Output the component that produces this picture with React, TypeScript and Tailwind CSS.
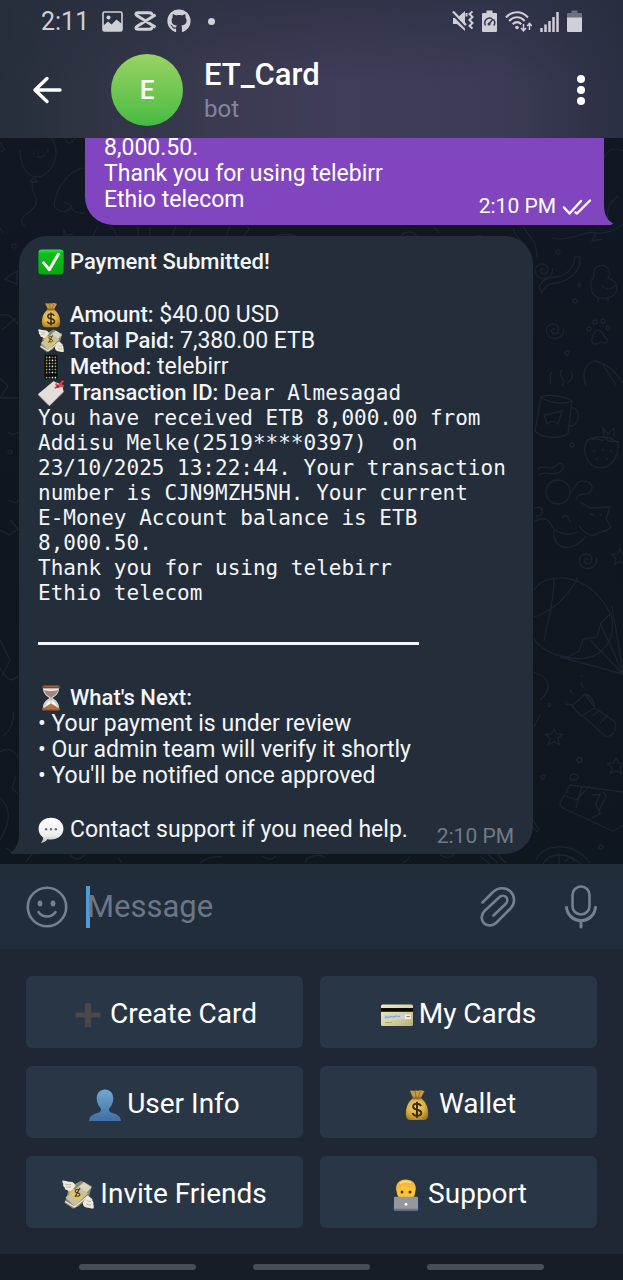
import type { ReactNode } from "react";
import { FaGithub } from "react-icons/fa";

type IconProps = { className?: string };

/* ---------- emoji drawings ---------- */

function CheckEmoji({ className = "" }: IconProps) {
  return (
    <svg viewBox="0 0 32 32" className={className} aria-hidden="true">
      <defs>
        <linearGradient id="chk" x1="0" y1="0" x2="0" y2="1">
          <stop offset="0" stopColor="#3fe04a" />
          <stop offset="0.15" stopColor="#0fbf1c" />
          <stop offset="1" stopColor="#08a80c" />
        </linearGradient>
      </defs>
      <rect x="0.5" y="0.5" width="31" height="31" rx="4" fill="url(#chk)" />
      <path d="M7 17l7 8.5L25 6.5" fill="none" stroke="#fff" strokeWidth="3.6" strokeLinecap="round" strokeLinejoin="round" />
    </svg>
  );
}

function MoneyBagEmoji({ className = "" }: IconProps) {
  return (
    <svg viewBox="0 0 32 32" className={className} aria-hidden="true">
      <defs>
        <radialGradient id="bag" cx="0.45" cy="0.4" r="0.65">
          <stop offset="0" stopColor="#f6d873" />
          <stop offset="0.6" stopColor="#dcae43" />
          <stop offset="1" stopColor="#a47a24" />
        </radialGradient>
      </defs>
      <path d="M9 2c2-1.200 3 .4 4.500-.2C15 1 16 2.200 18 1.500c2-.7 3 .6 5.500.5L19.800 9h-7.600z" fill="#c99a3a" />
      <path d="M14 2l1 6M19 2.500L17.500 8" stroke="#8d6a22" strokeWidth="0.8" />
      <path d="M12 9.500C8 12 5 17 4.800 24c-.1 4 .9 7 4.200 7h14c3.300 0 4.300-3 4.200-7C27 17 24 12 20 9.500z" fill="url(#bag)" />
      <rect x="11.500" y="7.800" width="9" height="2.600" rx="1.300" fill="#9c6b35" />
      <path d="M20 17.200c-.6-1.700-2-2.400-4-2.400-2.300 0-3.900 1.100-3.900 2.900 0 4 8.200 2 8.200 6 0 2-1.900 3.100-4.300 3.100-2.300 0-4-.9-4.400-2.900M16 12.800v16" fill="none" stroke="#3f3013" strokeWidth="2" />
    </svg>
  );
}

function WingedMoneyEmoji({ className = "" }: IconProps) {
  return (
    <svg viewBox="0 0 32 32" className={className} aria-hidden="true">
      <path d="M6.500 8.500L19 1.800 29.800 7 27 17.500 17 27l-6 2.800-8.500-6L5 17z" fill="#8b8a72" />
      <path d="M8 15L22 3l7.500 5.500L15.500 22z" fill="#d9d6bd" />
      <path d="M3.500 18.500L17 7.500l9 7L12.500 27z" fill="#c5c1a4" />
      <path d="M3 22.500l9.500 5.500L26 17" fill="none" stroke="#efecd8" strokeWidth="1.300" />
      <path d="M10.500 8.500l11 9.500-5.500 5L6.500 14z" fill="#e3c460" opacity="0.85" />
      <path d="M16.800 10.500c-2-.8-4 .7-3.300 2.400.8 1.600 4 .2 4.400 2.500.2 1.700-2.600 2.600-4.400 1M18 9l-5 9" fill="none" stroke="#483c1b" strokeWidth="1.200" />
      <path d="M.5 1.500c3 0 5 1.500 7.500 1.200 3-.2 5 1.600 5.500 4.300L9 12c-1.500.7-3 .2-3.800-1-1.700.2-2.500-1-2.500-2.500C1 7.500.8 6 1.300 4.800.3 4 .2 2.500.5 1.500z" fill="#edeadd" />
      <path d="M3 5c2 1 4 1 6 .5M4 8c2 .5 3.500.4 5-.4" fill="none" stroke="#a9a692" strokeWidth="0.8" />
      <path d="M31.500 29.500c-2.500.3-4.500-.9-7-1-2.500-.2-3.900-2.500-3.700-5L25 17.500c1.700-.5 3 .3 3.700 1.500 1.500.3 2 1.500 1.700 2.800 1.300 1 1.300 2.400.8 3.400.7 1.300.8 2.800.3 4.300z" fill="#edeadd" />
      <path d="M29 26c-2 .2-3.700-.5-5-1.300M29 22.500c-1.700 0-3-.3-4-1" fill="none" stroke="#a9a692" strokeWidth="0.8" />
    </svg>
  );
}

const appColors = ["#58c26b", "#e8e8e8", "#56a9dd", "#e08c43", "#d9534f", "#e7c84b"];

function PhoneEmoji({ className = "" }: IconProps) {
  return (
    <svg viewBox="0 0 32 32" className={className} aria-hidden="true">
      <rect x="7.500" y="0.500" width="17" height="31" rx="2" fill="#0b0b0c" stroke="#33373c" strokeWidth="0.6" />
      {Array.from({ length: 24 }, (_, i) => (
        <rect key={i} x={9.6 + (i % 4) * 3.6} y={3.2 + Math.floor(i / 4) * 3.7} width="2" height="2" rx="0.5" fill={appColors[(i * 5 + Math.floor(i / 4)) % 6]} />
      ))}
      {[0, 1, 2, 3].map((i) => (
        <rect key={i} x={9.6 + i * 3.6} y="28" width="2" height="2" rx="0.5" fill={["#58c26b", "#57a0e0", "#e9e9e9", "#f0f0a0"][i]} />
      ))}
    </svg>
  );
}

function TagEmoji({ className = "" }: IconProps) {
  return (
    <svg viewBox="0 0 32 32" className={className} aria-hidden="true">
      <path d="M19 1.500L0.500 17c-.5.500-.5 1 0 1.600L13 31c.7.700 1.400.7 2 0L31.500 14.500 30 6z" fill="#e4dedb" />
      <path d="M.6 18.200L13.200 30.800c.6.600 1.200.6 1.700 0L31.500 14.500" fill="none" stroke="#b9aea9" strokeWidth="1.200" />
      <path d="M24.500 8L22.300 5.200M24.500 8l6-6.500M24.500 8l6.500-1M24.500 8l-3 1.500" stroke="#e0404d" strokeWidth="2.400" strokeLinecap="round" />
      <circle cx="24.300" cy="8.200" r="1.600" fill="#a8222f" />
    </svg>
  );
}

function HourglassEmoji({ className = "" }: IconProps) {
  return (
    <svg viewBox="0 0 32 32" className={className} aria-hidden="true">
      <path d="M6 3.500h20c0 6-3 9.500-8.200 12.500C23 19 26 22.500 26 28.500H6C6 22.500 9 19 14.200 16 9 13 6 9.500 6 3.500z" fill="#cfd4d8" />
      <path d="M7.500 6.500h17c-.8 4-4.200 6.800-8.500 8.800-4.300-2-7.700-4.800-8.500-8.800z" fill="#a48577" />
      <path d="M8 5.500c5 1.500 11 1.500 16 0" stroke="#f2f2f2" strokeWidth="1.600" fill="none" />
      <path d="M16 18c-3 2-6 4-7 9h14c-1-5-4-7-7-9z" fill="#f4f6f7" />
      <path d="M8 28.500c2-3 5-4.500 8-5.500 3 1 6 2.500 8 5.500z" fill="#b7723e" />
      <path d="M16 14v10" stroke="#b98a63" strokeWidth="0.8" />
      <rect x="5" y="0.500" width="22" height="3.600" rx="1.200" fill="#84452a" />
      <rect x="5" y="28" width="22" height="3.500" rx="1.200" fill="#a35a30" />
      <path d="M7 1.500h18M7 29h18" stroke="#c98757" strokeWidth="0.7" />
    </svg>
  );
}

function SpeechEmoji({ className = "" }: IconProps) {
  return (
    <svg viewBox="0 0 32 32" className={className} aria-hidden="true">
      <defs>
        <linearGradient id="spk" x1="0" y1="0" x2="0" y2="1">
          <stop offset="0" stopColor="#ffffff" />
          <stop offset="0.7" stopColor="#ececec" />
          <stop offset="1" stopColor="#b9bcbe" />
        </linearGradient>
      </defs>
      <path d="M16 1C7.500 1 .7 6.500.7 14.500c0 5 2.300 8.500 5.500 10.600.3 2.300-.8 4.800-3 6.700 3.800-.2 6.700-2 8.300-4.500 1.500.3 3 .4 4.500.4 8.500 0 15.300-5.200 15.300-13.200S24.500 1 16 1z" fill="url(#spk)" />
      <circle cx="10" cy="15" r="1.500" fill="#6b6d6f" />
      <circle cx="16" cy="15" r="1.500" fill="#6b6d6f" />
      <circle cx="22" cy="15" r="1.500" fill="#6b6d6f" />
    </svg>
  );
}

function PlusEmoji({ className = "" }: IconProps) {
  return (
    <svg viewBox="0 0 32 32" className={className} aria-hidden="true">
      <path d="M13 4h6v9.500h9.500v5H19V28h-6v-9.500H3.500v-5H13z" fill="#48484a" />
    </svg>
  );
}

function CardEmoji({ className = "" }: IconProps) {
  return (
    <svg viewBox="0 0 32 32" className={className} aria-hidden="true">
      <defs>
        <linearGradient id="card" x1="0" y1="0" x2="1" y2="1">
          <stop offset="0" stopColor="#f0eac0" />
          <stop offset="0.5" stopColor="#dcd5a0" />
          <stop offset="1" stopColor="#b9ad70" />
        </linearGradient>
      </defs>
      <rect x="0" y="5.500" width="32" height="21.500" rx="1.600" fill="url(#card)" />
      <rect x="0" y="9" width="32" height="3.800" fill="#0a0a08" />
      <rect x="3" y="15.500" width="22" height="5" fill="#c3d3d8" />
      <path d="M4 18.500c2-2 3 1 5-.5s3 1 5-.5 3 1 5-.4" fill="none" stroke="#6391b5" strokeWidth="0.9" />
      <rect x="24" y="15.500" width="6" height="4.500" fill="#eff0e9" />
      <path d="M25.500 17.600h3.500" stroke="#a04a4a" strokeWidth="0.9" />
      <path d="M4 23.500h7" stroke="#aca57c" strokeWidth="1" />
    </svg>
  );
}

function PersonEmoji({ className = "" }: IconProps) {
  return (
    <svg viewBox="0 0 32 32" className={className} aria-hidden="true">
      <defs>
        <linearGradient id="usr" x1="0" y1="0" x2="0" y2="1">
          <stop offset="0" stopColor="#73a7cf" />
          <stop offset="1" stopColor="#3f6fa5" />
        </linearGradient>
      </defs>
      <path d="M16 0.500c-5 0-8.300 3.700-8.300 8.800 0 4.200 1.600 8 4.200 10.200.3 2.200-.4 3.600-2.600 4.300C4.500 25.400.6 26.500 0 32h32c-.6-5.500-4.500-6.600-9.300-8.200-2.200-.7-2.900-2.100-2.600-4.300 2.600-2.200 4.200-6 4.200-10.200 0-5.100-3.300-8.800-8.300-8.800z" fill="url(#usr)" />
    </svg>
  );
}

function TechnologistEmoji({ className = "" }: IconProps) {
  return (
    <svg viewBox="0 0 32 32" className={className} aria-hidden="true">
      <path d="M3 31.500c.2-6 3-9 7.500-10h11c4.500 1 7.300 4 7.500 10z" fill="#2d3bb8" />
      <ellipse cx="16" cy="12" rx="9.400" ry="10" fill="#fbc531" />
      <path d="M6.300 12C5 4.500 9.500.5 15.500.5c6.500 0 11.500 3.700 10.200 11.500l-2-4c-3 .8-8 .4-11-1.500-1 2.500-4 3.500-6.400 5.500z" fill="#f3b840" />
      <path d="M10 4.500c3-2.500 8-2.700 11-.6" fill="none" stroke="#ffe09a" strokeWidth="1.500" />
      <circle cx="12" cy="13" r="1.500" fill="#4d351a" />
      <circle cx="20" cy="13" r="1.500" fill="#4d351a" />
      <rect x="4" y="17.800" width="24" height="13.700" rx="1.200" fill="#93979e" />
      <rect x="4" y="29.800" width="24" height="1.700" fill="#6c7077" />
      <circle cx="16" cy="25.200" r="1.500" fill="#f2f3f5" />
    </svg>
  );
}

/* ---------- interface icons ---------- */

function StatusLeftIcons() {
  return (
    <>
      <svg viewBox="0 0 21 21" className="h-[21px] w-[21px]" aria-hidden="true">
        <rect x="1" y="1" width="19" height="19" rx="1.500" fill="none" stroke="currentColor" strokeWidth="1.600" />
        <circle cx="6.500" cy="6.500" r="2" fill="currentColor" />
        <path d="M1 15l5-4.500 3.500 3 5-5L20 13v7H1z" fill="currentColor" />
      </svg>
      <svg viewBox="0 0 22 20" className="h-5 w-[22px]" aria-hidden="true">
        <path d="M21.500 3.800L3.200 15.200c-2 1.300-1.600 3 .6 3h11.700c2 0 2.500-1 2.500-2.500M21.500 16.200L3.200 4.800c-2-1.300-1.600-3 .6-3h11.700c2 0 2.500 1 2.500 2.500" fill="none" stroke="currentColor" strokeWidth="3" />
      </svg>
      <FaGithub className="h-6 w-6" aria-hidden="true" />
    </>
  );
}

function StatusRightIcons() {
  return (
    <>
      <svg viewBox="0 0 22 22" className="h-[22px] w-[22px]" aria-hidden="true">
        <path d="M1 8h4l8-7v20l-8-7H1z" fill="currentColor" />
        <path d="M0 3.500L14 18" stroke="#3a3b50" strokeWidth="2.200" />
        <path d="M1 1.500l13 13.500" stroke="currentColor" strokeWidth="2.200" />
        <path d="M20.500 1.500l-3 2.500 3 3-3 3 3 3-3 3 3 2.500M14.500 3v3.500" fill="none" stroke="currentColor" strokeWidth="2" />
      </svg>
      <svg viewBox="0 0 15 22" className="h-[22px] w-[15px]" aria-hidden="true">
        <path d="M4.500.5h6V3H14a1 1 0 011 1v17a1 1 0 01-1 1H1a1 1 0 01-1-1V4a1 1 0 011-1h3.500z" fill="currentColor" />
        <path d="M3.500 15.500a5 5 0 016.500-7M11.500 9.500a5 5 0 01.3 6M7 14l4-5" fill="none" stroke="#36384b" strokeWidth="1.500" />
        <circle cx="7" cy="14" r="1.500" fill="#36384b" />
      </svg>
      <svg viewBox="0 0 27 22" className="h-[22px] w-[27px]" aria-hidden="true">
        <path d="M1 7.500C7 .5 17 .5 23 7.500M4.200 11c4.500-5 11-5 15.500 0M7.800 14.300c2.500-2.800 6-2.800 8.500 0" fill="none" stroke="currentColor" strokeWidth="2.200" />
        <circle cx="12" cy="17.500" r="1.800" fill="currentColor" />
        <path d="M18.500 14v6M16 18l2.500 2.800L21 18M24.500 20v-6M22.200 16l2.300-2.600L26.800 16" fill="none" stroke="currentColor" strokeWidth="1.500" />
      </svg>
      <svg viewBox="0 0 19 22" className="h-[22px] w-[19px]" aria-hidden="true">
        <path d="M1.500 22v-4M5.500 22v-7.500M9.500 22V11M13.500 22V7M17.500 22V2" stroke="currentColor" strokeWidth="2.500" />
      </svg>
      <svg viewBox="0 0 15 22" className="h-[22px] w-[15px]" aria-hidden="true">
        <path d="M4.500.5h6V3H14a1 1 0 011 1v4H0V4a1 1 0 011-1h3.500z" fill="currentColor" opacity="0.4" />
        <path d="M0 7.500h15V21a1 1 0 01-1 1H1a1 1 0 01-1-1z" fill="currentColor" />
      </svg>
    </>
  );
}

function DoubleCheck() {
  return (
    <svg viewBox="0 0 30 18" className="h-[18px] w-[30px]" role="img" aria-label="Read">
      <path d="M2 9.500l5.500 6L19 3M13.500 14.500l1.500 1L28 2.500" fill="none" stroke="currentColor" strokeWidth="2.400" strokeLinecap="round" strokeLinejoin="round" />
    </svg>
  );
}

/* ---------- wallpaper ---------- */

function Spiral({ x, y }: { x: number; y: number }) {
  return <path transform={`translate(${x} ${y})`} d="M1 0c0-2-3-2-3.500.5-.5 3 4 5 6.500 1.500C6.500-2 3-6.500-1.500-6-7-5.500-9 0-7 4c2.500 5 10 6 14 2 2-2 3-5 2.500-8" />;
}

function Star({ x, y }: { x: number; y: number }) {
  return <path transform={`translate(${x} ${y})`} d="M0-8l2.500 5 6 .5-4.500 4 1.500 6L0 4.500-5.500 7.500-4 1.500l-4.500-4 6-.5z" />;
}

function Wallpaper() {
  return (
    <svg
      viewBox="0 138 623 726"
      preserveAspectRatio="xMidYMid slice"
      className="absolute inset-0 h-full w-full text-[#1b2530]"
      fill="none"
      stroke="currentColor"
      strokeWidth="1.300"
      aria-hidden="true"
    >
      {/* balloon and dolphin */}
      <path d="M20 150c0 14 6 26 16 27 11 0 20-12 20-25 0-9-4-14-8-18M33 178l-3 4h7l-3-4M33 182c-4 10 6 14 3 22-3 9-16 10-14 19 0 2 2 3 3 3M34 151v3M48 149v3M37 156q4 3 8-1" />
      <path d="M84 168c-14 2-28 18-30 38 4 6 12 8 17 1 2 5 8 7 14 6M64 202l8 4M0 143l5 6-5 3M65 138c1 6 7 7 10 0M0 228l3 5M64 230l3 5 5-1-1 7-7-2zM16 246a2 2 0 100 .1M5 279l12-8v13z" />
      {/* strip between the bubbles */}
      <path d="M98 226l-7 14M110 226c6 3 4 10 11 14M138 226v12M150 227v11M176 226l-5 12M192 228l-4 10M230 226l-4 12M246 226c6 2 0 8-5 12M272 238q12-7 30 0M400 238c3-8 16-8 17 0M434 227l5 6M474 238q5-5 10 0" />
      {/* left edge */}
      <path d="M0 315c8-2 14 3 18 10M2 330l14-12M0 378l8 8-8 12M0 398h18M8 432q4 5 11 0M12 452a2 2 0 100 .1M8 500l8 3 3-3M10 520l8 9-9 6-9-5M0 640l10 20-8 16M0 668c8 14 12 14 18 8M13 712c2 10-4 20-10 24M0 752c8-6 16 0 18 6M0 798c12 10 10 26 0 42M16 776l-4 12 6 6M6 848l8 6" />
      {/* right side, top */}
      <path d="M603 161c4-12 10-14 20-10M608 218c-2-8 2-16 10-22M552 238c12 4 26-4 41-6 10 4 20-1 30-8M596 233l-4 8 10-2M513 228c2 12 14 14 18 30M523 226c4 10 14 12 14 32" />
      <Spiral x={543} y={270} />
      <path d="M580 257c1 16-12 24-24 26-9 1-12 4-14 10l-3-6c3-8 10-10 17-10 12-2 18-10 19-20zM560 252a2 2 0 100 .1M581 285a1.500 1.500 0 100 .1M573 301a2 2 0 104 0 2 2 0 10-4 0" />
      <path d="M594 276a8 8 0 1114 2c7 2 11 8 8 14-4 8-20 9-24 0-2-6-1-12 2-16zM602 285c4 6 9 5 14 0M598 298v4M608 298v4" />
      <Spiral x={554} y={330} />
      <path d="M592 339c2-10 8-12 12-3 6 5 3 9-3 6-5 3-10 3-9-3zM587 329a2 2 0 104 0 2 2 0 10-4 0M593 322a2 2 0 104 0 2 2 0 10-4 0M601 321a2 2 0 104 0 2 2 0 10-4 0M606 328a2 2 0 104 0 2 2 0 10-4 0M565 353a2 2 0 104 0 2 2 0 10-4 0" />
      <path d="M586 386c-4-12-2-22 8-25 14 2 22 12 29 22M602 363l14 22M562 370c-6 6 6 8 0 16M550 384c2-6-2-8 2-12M567 383q8-5 4-12" />
      {/* mug and strawberry */}
      <path d="M541 397c8-4 26 0 31 4M541 397l-6 34c6 8 28 8 33 2l4-32c-8 4-24 2-31-4zM571 408c10-2 10 20-3 18M544 415l18-4-4 13-6-3-5 3z" />
      <path d="M586 442c4-6 26-8 32 2 1 14-8 24-18 24-12-1-18-14-14-26zM592 440c6-4 10 4 14-2 2 6 10 2 14 4M604 436l-1-8 5 6 6-6v9M594 450v2M603 449v2M611 450v2M597 458v2M607 458v2M570 445a2 2 0 104 0 2 2 0 10-4 0" />
      {/* cats */}
      <path d="M537 470c6-8 14 4 22-7 6 0 6 8-2 10-6 2-14-2-18 2M546 492a12 12 0 1024 0 12 12 0 10-24 0M570 494l8-12c10-4 18 4 12 10-4 4-14 0-14 8M580 502l10 6 20-1-4 12 5 8c-6 6-12 4-16 8-8 2-14-6-16-10M590 514l4 1M601 514v2M534 522c8-6 14-4 18 4 4 8 16 10 26 6M554 530c-2 20 18 24 32 6M562 518q6-6 8 4M534 508c10-4 12 8 2 8" />
      <Spiral x={587} y={560} />
      <Star x={620} y={557} />
      {/* hot air balloon */}
      <path d="M534 590c12-20 60-18 78 28 4 26-14 44-40 40-16-1-34-10-38-20M554 579c0 24-6 40-10 62M578 577c-10 20-26 34-44 40M611 613l-10 10-4 14-14 2-4 12-12 6M600 623l23 50M612 606l11 66M560 657l63 17M590 640l33 34" />
      <path d="M534 672c18 6 18 18 6 28M540 715l-6 12M582 675v2M551 705a1.500 1.500 0 100 .1M566 704l6 1M570 690l3 4M581 682l2 6" />
      {/* flashlight */}
      <path d="M572 706l13-12 10 14-14 8zM585 694q8 2 10 14M595 708l20 14c2 10-4 16-10 14l-22-20M592 716l8-6M600 723l8-8" />
      <Star x={554} y={737} />
      <Star x={616} y={766} />
      <path d="M577 760a2.500 2.500 0 105 0 2.500 2.500 0 10-5 0M541 777a2 2 0 104 0 2 2 0 10-4 0M599 847a2 2 0 104 0 2 2 0 10-4 0M570 777a4 3 0 108 0 4 3 0 10-8 0" />
      {/* gift */}
      <path d="M560 803l10-18 53 7M560 803q0 4 5 6l48 22 10-6M566 796l10 4 14-14M582 786l-6 22M592 795l8-1-4 10 4 10-8 4M603 792c8 6-4 10-4 22" />
      {/* bottom strip */}
      <path d="M26 862l6-8M70 855q8 8 14 0M118 858l4 5M200 863q10-8 22-6M262 856q8 6 14 0M305 863c2-8 16-10 20-5M410 856q-3 6-8 7M440 855q8 5 14 0M480 856l10 8M488 855l10 8M498 855l8 8M536 860c6-16 38-20 54 3M543 864c6-12 26-12 38 0M559 854v10M566 862a4 4 0 118 0M533 820l6 10M533 828l5 4" />
    </svg>
  );
}

/* ---------- content ---------- */

function Line({ icon, children }: { icon: ReactNode; children: ReactNode }) {
  return (
    <p className="flex items-center gap-[6px]">
      {icon}
      <span className="min-w-0">{children}</span>
    </p>
  );
}

const transactionText = `You have received ETB 8,000.00 from
Addisu Melke(2519****0397)  on
23/10/2025 13:22:44. Your transaction
number is CJN9MZH5NH. Your current
E-Money Account balance is ETB
8,000.50.
Thank you for using telebirr
Ethio telecom`;

const mono = "font-['DejaVu_Sans_Mono','Liberation_Mono',monospace] text-[21px]";
const strong = "text-[22px] font-medium";
const emoji = "h-[26px] w-[26px] shrink-0";
const keyEmoji = "h-8 w-8 shrink-0";

const keys = [
  { label: "Create Card", icon: <PlusEmoji className={keyEmoji} /> },
  { label: "My Cards", icon: <CardEmoji className={keyEmoji} /> },
  { label: "User Info", icon: <PersonEmoji className={keyEmoji} /> },
  { label: "Wallet", icon: <MoneyBagEmoji className={keyEmoji} /> },
  { label: "Invite Friends", icon: <WingedMoneyEmoji className={keyEmoji} /> },
  { label: "Support", icon: <TechnologistEmoji className={keyEmoji} /> },
];

export default function App() {
  return (
    <div className="flex min-h-screen flex-col bg-[#1e2733] font-[Roboto,sans-serif] text-white">
      <header className="bg-[linear-gradient(180deg,rgba(38,44,60,0.55),rgba(38,44,60,0)_60%),linear-gradient(90deg,#252e3a_0%,#2f3443_14%,#3a3a50_34%,#3f3d5a_55%,#3b3b57_80%,#2b2f42_100%)]">
        <div className="flex h-[42px] items-center justify-between px-[41px] text-[#cfcfd8]">
          <div className="flex items-center gap-[11px]">
            <span className="pr-[2px] text-[25px] leading-none">2:11</span>
            <StatusLeftIcons />
            <span className="ml-[6px] h-[7px] w-[7px] rounded-full bg-current" />
          </div>
          <div className="flex items-center gap-2">
            <StatusRightIcons />
          </div>
        </div>
        <div className="flex h-24 items-center pr-[26px] pl-8">
          <button type="button" aria-label="Back" className="mr-[49px]">
            <svg viewBox="0 0 30 28" className="h-7 w-[30px]" aria-hidden="true">
              <path d="M28 14H3M15 2.500L3 14l12 11.500" fill="none" stroke="currentColor" strokeWidth="3.400" strokeLinecap="round" strokeLinejoin="round" />
            </svg>
          </button>
          <div className="flex h-[72px] w-[72px] shrink-0 items-center justify-center rounded-full bg-linear-to-b from-[#98d365] to-[#42bb40] text-[26px] font-medium">E</div>
          <div className="ml-[21px] min-w-0 flex-1 pt-[2px]">
            <h1 className="text-[31px] leading-9 font-medium">ET_Card</h1>
            <p className="text-2xl leading-8 text-[#8385a0]">bot</p>
          </div>
          <button type="button" aria-label="More options" className="flex w-8 flex-col items-center gap-[3px]">
            <span className="h-2 w-2 rounded-full bg-white" />
            <span className="h-2 w-2 rounded-full bg-white" />
            <span className="h-2 w-2 rounded-full bg-white" />
          </button>
        </div>
      </header>

      <main className="relative flex flex-1 flex-col bg-linear-to-b from-[#111824] via-[#10161f] to-[#0f171e] pb-[10px] text-[23px] leading-[26px]">
        <Wallpaper />
        <section className="relative mr-[19px] flex w-[519px] max-w-[90%] flex-col self-end rounded-bl-[28px] bg-[#8146bf] pr-3 pb-3 pl-[19px]">
          <svg viewBox="0 0 10 20" className="absolute -right-[9px] bottom-0 h-5 w-[10px] text-[#8146bf]" aria-hidden="true">
            <path d="M0 0h1c0 9 3 15 9 18.500L8 20H0z" fill="currentColor" />
          </svg>
          <p className="-mt-[3px]">8,000.50.</p>
          <p>Thank you for using telebirr</p>
          <div className="flex items-end justify-between">
            <p>Ethio telecom</p>
            <div className="-mb-1 flex items-center gap-[6px] text-[21px] leading-[21px]">
              <time>2:10 PM</time>
              <DoubleCheck />
            </div>
          </div>
        </section>

        <section className="relative mt-[11px] ml-[19px] w-[514px] max-w-[90%] rounded-[28px] rounded-bl-none bg-[#232e3a] px-[19px] pt-[13px] pb-[11px] text-[#f3f5f7]">
          <svg viewBox="0 0 10 20" className="absolute bottom-0 -left-[9px] h-5 w-[10px] text-[#232e3a]" aria-hidden="true">
            <path d="M10 0H9c0 9-3 15-9 18.500L2 20h8z" fill="currentColor" />
          </svg>
          <Line icon={<CheckEmoji className={emoji} />}>
            <b className={strong}>Payment Submitted!</b>
          </Line>
          <div className="mt-[27px]">
            <Line icon={<MoneyBagEmoji className={emoji} />}>
              <b className={strong}>Amount:</b> $40.00 USD
            </Line>
            <Line icon={<WingedMoneyEmoji className={emoji} />}>
              <b className={strong}>Total Paid:</b> 7,380.00 ETB
            </Line>
            <Line icon={<PhoneEmoji className={emoji} />}>
              <b className={strong}>Method:</b> telebirr
            </Line>
            <Line icon={<TagEmoji className={emoji} />}>
              <b className={strong}>Transaction ID:</b> <span className={mono}>Dear Almesagad</span>
            </Line>
          </div>
          <p className={`${mono} leading-[25px] whitespace-pre-wrap`}>{transactionText}</p>
          <hr className="mt-9 h-[3px] w-4/5 border-0 bg-[#f3f5f7]" />
          <div className="mt-10">
            <Line icon={<HourglassEmoji className={emoji} />}>
              <b className={strong}>What's Next:</b>
            </Line>
            <p>• Your payment is under review</p>
            <p>• Our admin team will verify it shortly</p>
            <p>• You'll be notified once approved</p>
          </div>
          <div className="mt-7 flex items-end justify-between">
            <Line icon={<SpeechEmoji className={emoji} />}>Contact support if you need help.</Line>
            <time className="-mb-1 text-[21px] leading-[21px] text-[#6f7c88]">2:10 PM</time>
          </div>
        </section>
      </main>

      <form className="flex h-[85px] items-center bg-[#222d3b] pr-[25px] pl-[26px] text-[#75808f]" onSubmit={(e) => e.preventDefault()}>
        <button type="button" aria-label="Emoji">
          <svg viewBox="0 0 42 42" className="h-[42px] w-[42px]" aria-hidden="true">
            <circle cx="21" cy="21" r="19.200" fill="none" stroke="currentColor" strokeWidth="2.600" />
            <ellipse cx="14" cy="17.500" rx="2.400" ry="3" fill="currentColor" />
            <ellipse cx="27" cy="17.500" rx="2.400" ry="3" fill="currentColor" />
            <path d="M12.500 26c4 6 13 6 17 0" fill="none" stroke="currentColor" strokeWidth="2.600" strokeLinecap="round" />
          </svg>
        </button>
        <span className="ml-[18px] h-[42px] w-1 bg-[#4e9ddb]" />
        <input
          type="text"
          aria-label="Message"
          placeholder="Message"
          className="-ml-[3px] h-12 min-w-0 flex-1 bg-transparent text-[31px] text-white outline-none placeholder:text-[#6b7786]"
        />
        <button type="button" aria-label="Attach file">
          <svg viewBox="0 0 36 42" className="h-[42px] w-9" aria-hidden="true">
            <path d="M2.500 16.500L12.500 6.500C18 1 26 1 30.500 5.500 35.500 10.500 35 18 30.500 22.500L16.500 36.500C12.500 40.500 7 40.500 3.800 37 .8 33.500 1 28.500 4.500 25L19 11.500C21.500 9 24.500 9.500 26 11 28 13 27.500 16 25.500 18L13.500 29.500" fill="none" stroke="currentColor" strokeWidth="2.600" strokeLinecap="round" strokeLinejoin="round" />
          </svg>
        </button>
        <button type="button" aria-label="Record voice" className="ml-12">
          <svg viewBox="0 0 34 46" className="h-[46px] w-[34px]" aria-hidden="true">
            <rect x="8.500" y="2.500" width="17" height="28" rx="8.500" fill="none" stroke="currentColor" strokeWidth="2.600" />
            <path d="M2.500 23.500c1 8 7 13 14.500 13s13.500-5 14.500-13M17 36.500V43" fill="none" stroke="currentColor" strokeWidth="3" strokeLinecap="round" />
          </svg>
        </button>
      </form>

      <div className="grid grid-cols-2 gap-x-[17px] gap-y-[18px] px-[26px] pt-[27px] pb-[26px]">
        {keys.map((k) => (
          <button key={k.label} type="button" className="flex h-[72px] items-center justify-center gap-[6px] rounded-md bg-[#293645] pt-1 text-[28px] leading-9">
            <span className="pt-[2px]">{k.icon}</span>
            <span>{k.label}</span>
          </button>
        ))}
      </div>

      <nav aria-label="System" className="flex h-[26px] items-center justify-center gap-[57px] bg-[#171d27]">
        <button type="button" aria-label="Recent apps" className="h-[6px] w-[117px] rounded-full bg-[#474d57]" />
        <button type="button" aria-label="Home" className="h-[6px] w-[117px] rounded-full bg-[#474d57]" />
        <button type="button" aria-label="Back" className="h-[6px] w-[117px] rounded-full bg-[#474d57]" />
      </nav>
    </div>
  );
}
